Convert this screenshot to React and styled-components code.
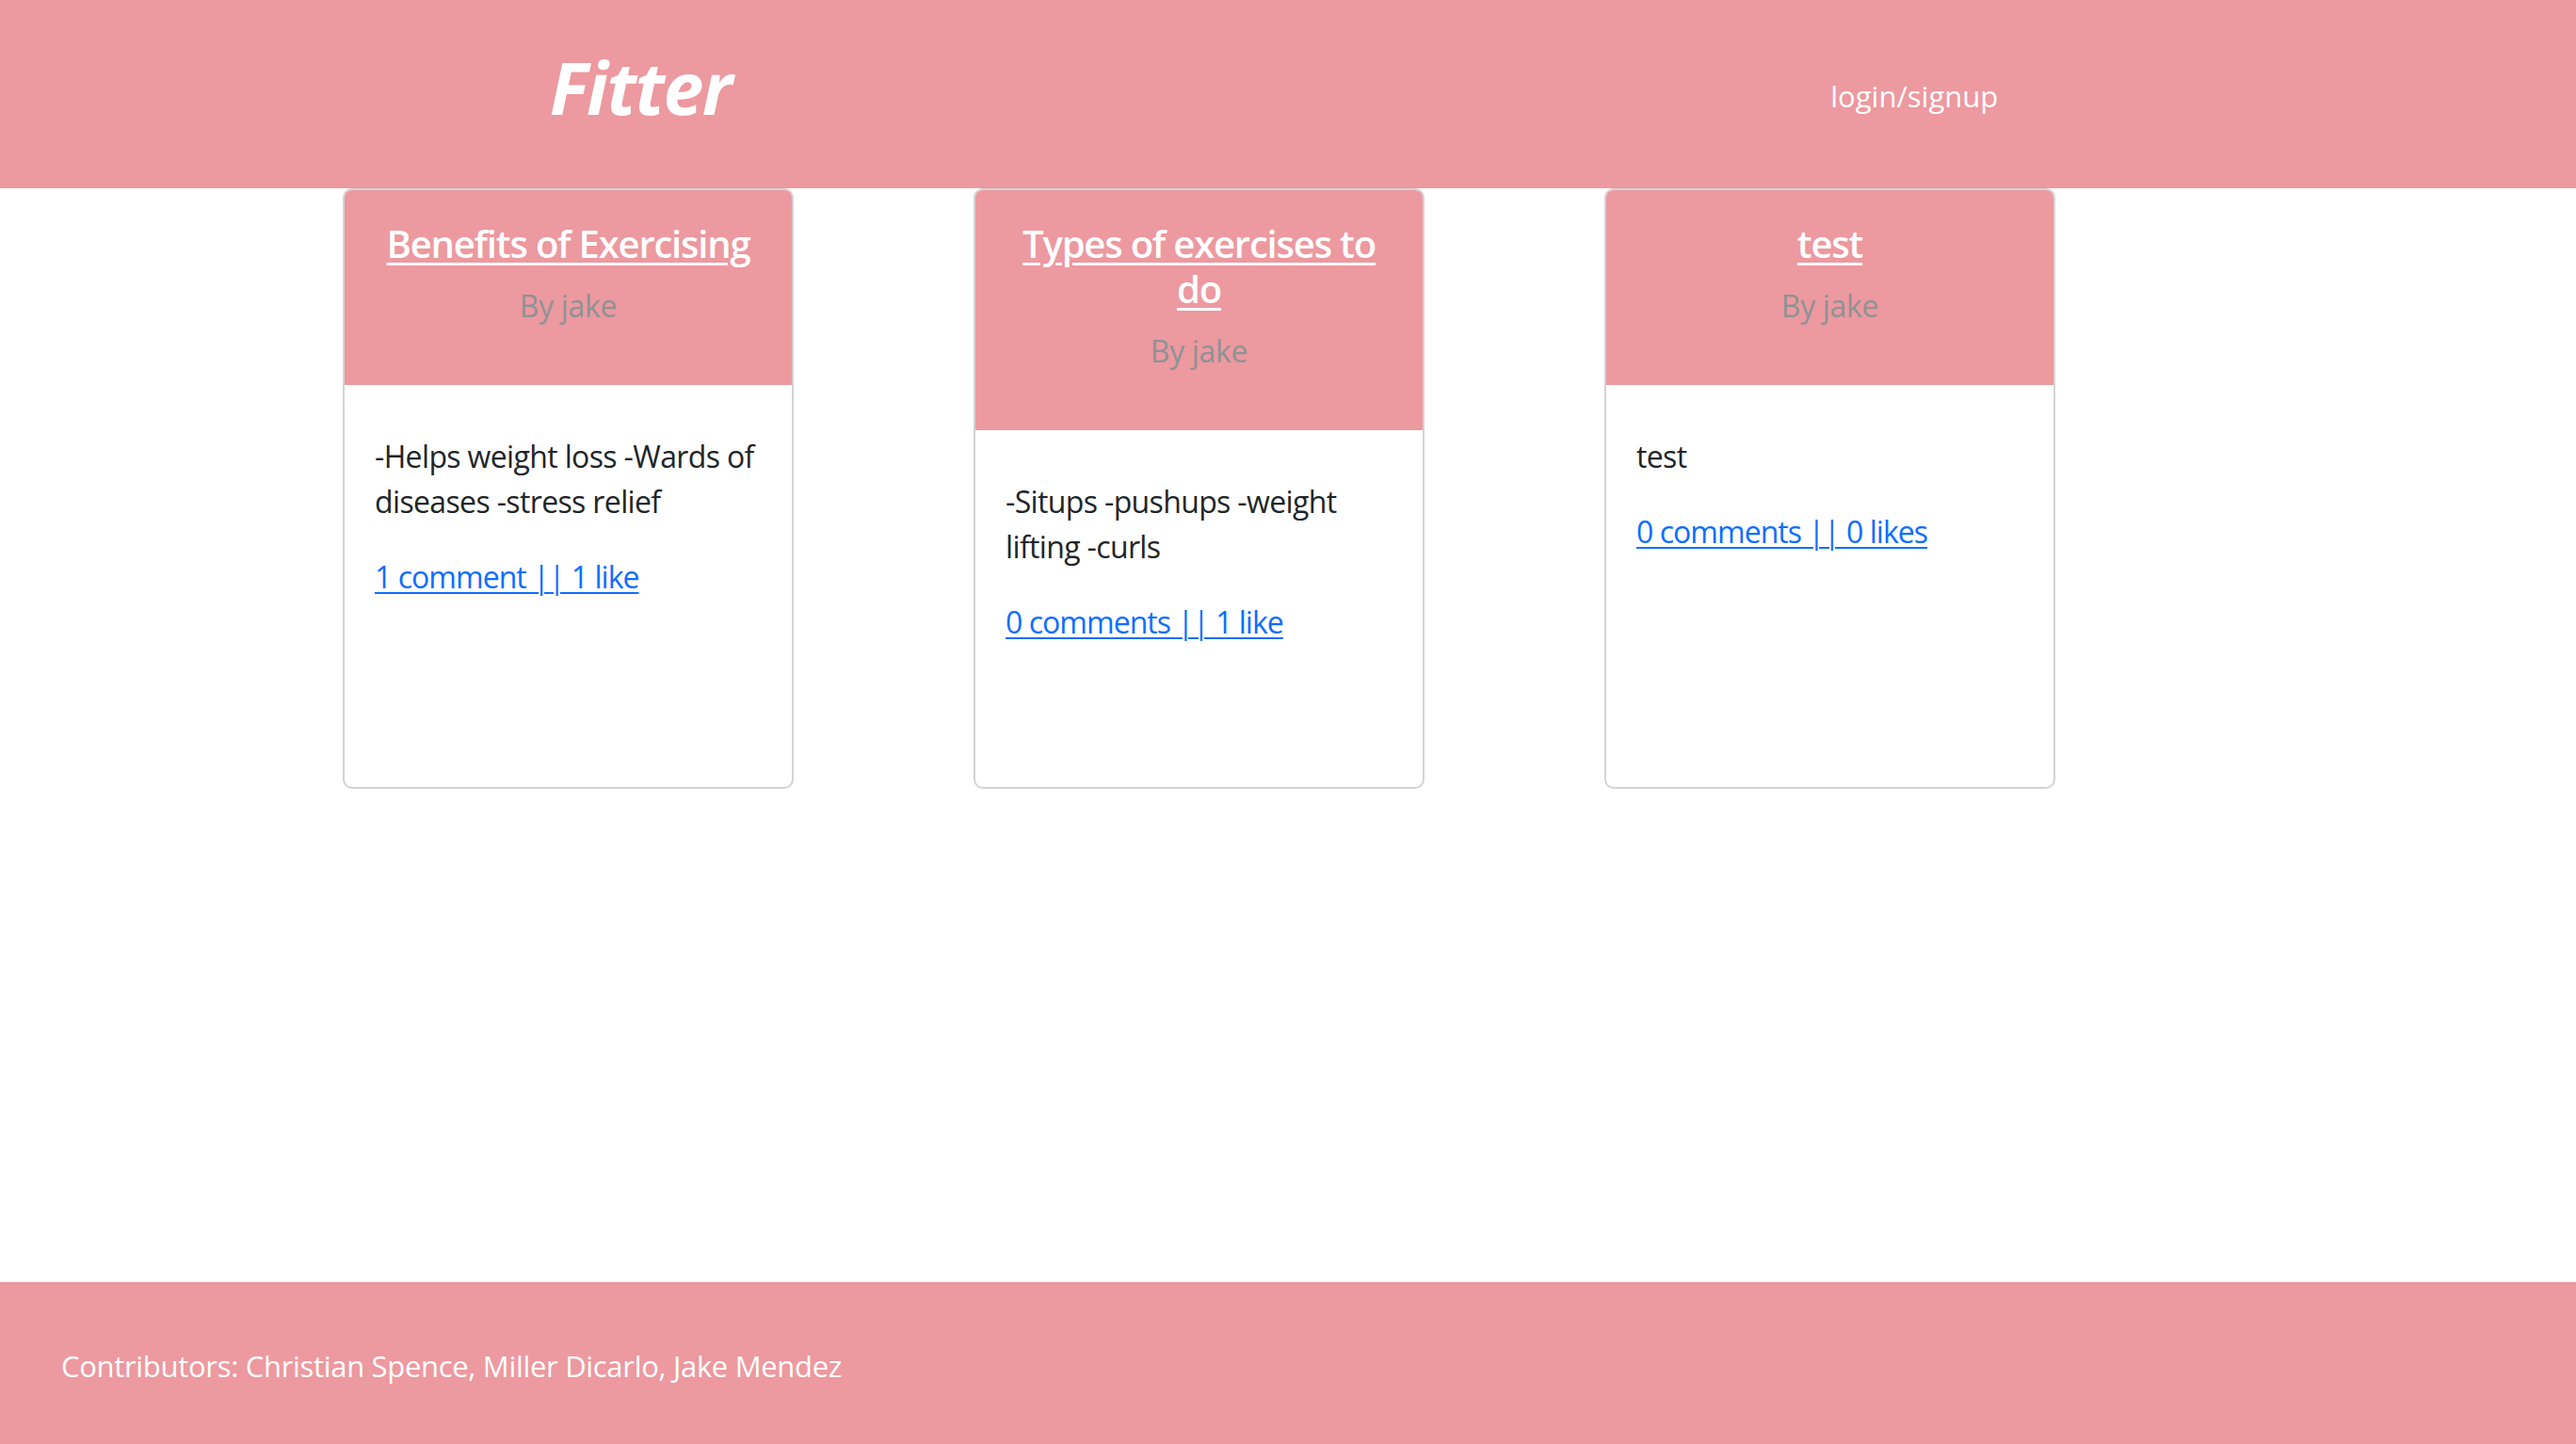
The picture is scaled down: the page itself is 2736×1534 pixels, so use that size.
import React from "react";
import styled, { createGlobalStyle } from "styled-components";

const PINK = "#ec999f";

const GlobalStyle = createGlobalStyle`
  html, body {
    margin: 0;
    padding: 0;
    background: #ffffff;
    font-family: "Open Sans", "Noto Sans", Arial, sans-serif;
    color: #212529;
  }
  * { box-sizing: border-box; }
`;

const Page = styled.div`
  min-height: 100vh;
  display: flex;
  flex-direction: column;
`;

const Header = styled.header`
  height: 200px;
  background: ${PINK};
  display: flex;
  align-items: center;
  justify-content: space-around;
  padding-right: 30px;
`;

const Brand = styled.h1`
  margin: 0 0 14px;
  font-size: 77px;
  line-height: 1.2;
  font-weight: 700;
  font-style: italic;
  color: #ffffff;
  letter-spacing: -0.02em;
`;

const NavLink = styled.a`
  margin-top: 4px;
  font-size: 31px;
  line-height: 1.5;
  color: #ffffff;
  text-decoration: none;
  cursor: pointer;
`;

const Main = styled.main`
  flex: 1;
  display: flex;
  align-items: flex-start;
  gap: 191px;
  padding-left: 364px;
`;

const Card = styled.article`
  width: 479px;
  height: 638px;
  border: 2px solid #d3d3d3;
  border-radius: 10px;
  overflow: hidden;
  background: #ffffff;
  display: flex;
  flex-direction: column;
`;

const CardHeader = styled.div`
  background: ${PINK};
  padding: 33px 30px 28px;
  text-align: center;
`;

const Title = styled.h5`
  margin: 0 0 18px;
  font-size: 40px;
  line-height: 48px;
  font-weight: 600;
  letter-spacing: -0.03em;

  a {
    color: #ffffff;
    text-decoration: underline;
    text-decoration-thickness: 3px;
    text-underline-offset: 5px;
  }
`;

const Byline = styled.p`
  margin: 0 0 32px;
  font-size: 32px;
  line-height: 48px;
  color: #8e9295;
  letter-spacing: -0.01em;
`;

const CardBody = styled.div`
  padding: 52px 22px 32px 32px;
`;

const Excerpt = styled.p`
  margin: 0 0 32px;
  font-size: 32px;
  line-height: 48px;
  color: #212529;
  letter-spacing: -0.02em;
`;

const Stats = styled.a`
  font-size: 32px;
  line-height: 48px;
  color: #0d6efd;
  text-decoration: underline;
  text-decoration-thickness: 2px;
  text-underline-offset: 4px;
  letter-spacing: -0.03em;
  cursor: pointer;
`;

const Footer = styled.footer`
  height: 172px;
  background: ${PINK};
  display: flex;
  align-items: center;
  padding: 6px 0 0 65px;
  font-size: 31px;
  line-height: 48px;
  color: #ffffff;
  letter-spacing: -0.01em;
`;

const posts = [
  {
    title: "Benefits of Exercising",
    author: "jake",
    body: "-Helps weight loss -Wards of diseases -stress relief",
    stats: "1 comment || 1 like",
  },
  {
    title: "Types of exercises to do",
    author: "jake",
    body: "-Situps -pushups -weight lifting -curls",
    stats: "0 comments || 1 like",
  },
  {
    title: "test",
    author: "jake",
    body: "test",
    stats: "0 comments || 0 likes",
  },
];

export default function App() {
  return (
    <Page>
      <GlobalStyle />
      <Header>
        <Brand>Fitter</Brand>
        <NavLink>login/signup</NavLink>
      </Header>
      <Main>
        {posts.map((p) => (
          <Card key={p.title}>
            <CardHeader>
              <Title>
                <a>{p.title}</a>
              </Title>
              <Byline>By {p.author}</Byline>
            </CardHeader>
            <CardBody>
              <Excerpt>{p.body}</Excerpt>
              <Stats>{p.stats}</Stats>
            </CardBody>
          </Card>
        ))}
      </Main>
      <Footer>Contributors: Christian Spence, Miller Dicarlo, Jake Mendez</Footer>
    </Page>
  );
}
